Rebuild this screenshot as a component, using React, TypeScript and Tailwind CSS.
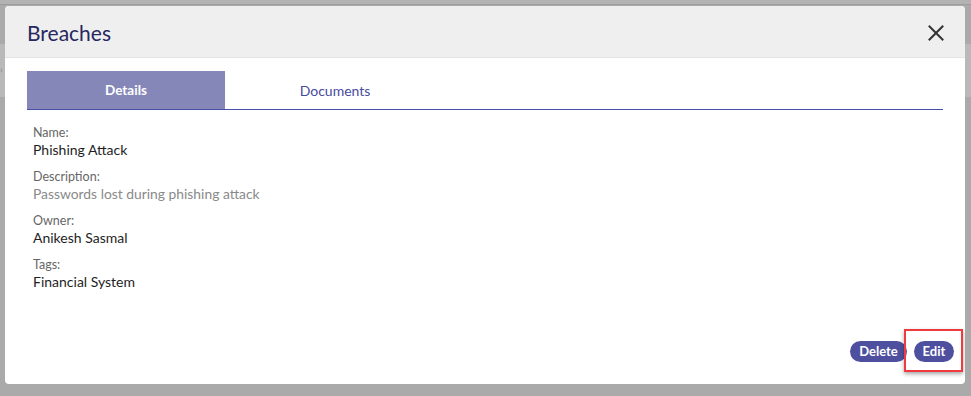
import React from "react";

const font = { fontFamily: "Lato, 'Open Sans', sans-serif" };

function Field({ label, value, muted }: { label: string; value: string; muted?: boolean }) {
  return (
    <div className="flex flex-col">
      <span className="text-[12.5px] leading-[16px] text-[#666666]">{label}</span>
      <span className={`leading-[18px] ${muted ? "text-[13.85px] text-[#8a8a8a]" : "text-[14px] text-[#1e1e1e]"}`}>{value}</span>
    </div>
  );
}

export default function App() {
  return (
    <div className="relative w-[971px] h-[396px] bg-[#aaaaaa] overflow-hidden" style={font}>
      <div className="absolute left-0 top-0 w-full h-[5px] bg-[#b3b3b3] border-b border-[#9d9d9d]" />
      <div className="absolute left-0 top-[44px] w-full h-[53px] bg-[#b9b9b9]" />
      <div className="absolute left-0 top-[62px] text-[#888] text-[10px]">›</div>
      <div className="absolute left-[5px] top-[6px] w-[960px] h-[378px] bg-white rounded-[4px] flex flex-col overflow-hidden">
        <div className="h-[52px] bg-[#efefef] border-b border-[#e4e4e4] flex items-center justify-between pl-[22px] pr-[21px] shrink-0">
          <span className="text-[21px] text-[#26285f] leading-none mt-[1px]">Breaches</span>
          <svg width="16" height="16" viewBox="0 0 16 16" className="mt-[2px]">
            <path d="M1.5 1.5 L14.5 14.5 M14.5 1.5 L1.5 14.5" stroke="#333" strokeWidth="2" strokeLinecap="square" />
          </svg>
        </div>
        <div className="flex-1 flex flex-col px-[22px] pt-[13px]">
          <div className="flex border-b border-[#4a4fa8]">
            <div className="w-[198px] h-[38px] bg-[#8587b9] flex items-center justify-center text-white font-bold text-[13.5px]">Details</div>
            <div className="w-[220px] h-[38px] flex items-center justify-center text-[#474b9c] text-[14px]">Documents</div>
          </div>
          <div className="flex flex-col gap-[10px] pl-[6px] pt-[15px]">
            <Field label="Name:" value="Phishing Attack" />
            <Field label="Description:" value="Passwords lost during phishing attack" muted />
            <Field label="Owner:" value="Anikesh Sasmal" />
            <Field label="Tags:" value="Financial System" />
          </div>
          <div className="mt-auto mb-[22px] flex items-center justify-end gap-[7px] -mr-[11px]">
            <button className="h-[21px] w-[57px] flex items-center justify-center rounded-full bg-[#4e509f] text-white text-[13px] font-bold leading-none">Delete</button>
            <div className="relative flex">
              <button className="h-[21px] w-[40px] flex items-center justify-center rounded-full bg-[#4e509f] text-white text-[13px] font-bold leading-none">Edit</button>
              <div className="absolute left-[-10px] top-[-12px] w-[59px] h-[43px] border-2 border-[#ef3a40] shadow-[0_2px_4px_rgba(0,0,0,0.35)]" />
            </div>
          </div>
        </div>
      </div>
    </div>
  );
}
